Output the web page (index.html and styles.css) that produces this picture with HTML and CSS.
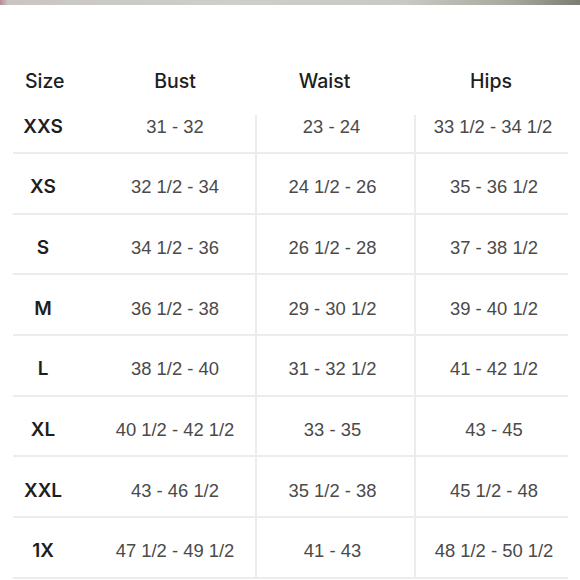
FILE: index.html
```html
<!DOCTYPE html>
<html>
<head>
<meta charset="utf-8">
<link rel="stylesheet" href="styles.css">
</head>
<body>
<div class="strip"></div>
<div class="chart">
  <div class="row head">
    <div class="cell c-size">Size</div>
    <div class="cell c-bust">Bust</div>
    <div class="cell c-waist">Waist</div>
    <div class="cell c-hips">Hips</div>
  </div>
  <div class="row first">
    <div class="cell c-size">XXS</div>
    <div class="cell c-bust">31 - 32</div>
    <div class="cell c-waist">23 - 24</div>
    <div class="cell c-hips">33 1/2 - 34 1/2</div>
  </div>
  <div class="row">
    <div class="cell c-size">XS</div>
    <div class="cell c-bust">32 1/2 - 34</div>
    <div class="cell c-waist">24 1/2 - 26</div>
    <div class="cell c-hips">35 - 36 1/2</div>
  </div>
  <div class="row">
    <div class="cell c-size">S</div>
    <div class="cell c-bust">34 1/2 - 36</div>
    <div class="cell c-waist">26 1/2 - 28</div>
    <div class="cell c-hips">37 - 38 1/2</div>
  </div>
  <div class="row">
    <div class="cell c-size">M</div>
    <div class="cell c-bust">36 1/2 - 38</div>
    <div class="cell c-waist">29 - 30 1/2</div>
    <div class="cell c-hips">39 - 40 1/2</div>
  </div>
  <div class="row">
    <div class="cell c-size">L</div>
    <div class="cell c-bust">38 1/2 - 40</div>
    <div class="cell c-waist">31 - 32 1/2</div>
    <div class="cell c-hips">41 - 42 1/2</div>
  </div>
  <div class="row">
    <div class="cell c-size">XL</div>
    <div class="cell c-bust">40 1/2 - 42 1/2</div>
    <div class="cell c-waist">33 - 35</div>
    <div class="cell c-hips">43 - 45</div>
  </div>
  <div class="row">
    <div class="cell c-size">XXL</div>
    <div class="cell c-bust">43 - 46 1/2</div>
    <div class="cell c-waist">35 1/2 - 38</div>
    <div class="cell c-hips">45 1/2 - 48</div>
  </div>
  <div class="row">
    <div class="cell c-size">1X</div>
    <div class="cell c-bust">47 1/2 - 49 1/2</div>
    <div class="cell c-waist">41 - 43</div>
    <div class="cell c-hips">48 1/2 - 50 1/2</div>
  </div>
</div>
</body>
</html>
```

FILE: styles.css
```css
html, body {
  margin: 0;
  padding: 0;
  background: #ffffff;
}
body {
  width: 580px;
  height: 580px;
  overflow: hidden;
  font-family: "Liberation Sans", Arial, sans-serif;
}
.strip {
  height: 5px;
  background: linear-gradient(90deg, #b98a95 0px, #c9c6c2 8px, #cfcecb 40%, #c9c8c2 70%, #a9a89e 88%, #7e7d72 100%);
}
.chart {
  margin-left: 13px;
  width: 555px;
}
.row {
  display: grid;
  grid-template-columns: 82px 160px 159px 154px;
  height: 60.7px;
  box-sizing: border-box;
  border-bottom: 2px solid #ececec;
}
.row.head {
  height: 88.3px;
  border-bottom: none;
  align-items: start;
  padding-top: 64px;
}
.cell {
  text-align: center;
  font-size: 18.4px;
  color: #4a4a4a;
  line-height: 24px;
  display: flex;
  align-items: center;
  justify-content: center;
  box-sizing: border-box;
  padding-top: 8px;
}
.row .c-waist, .row .c-hips {
  border-left: 2px solid #ececec;
}
.row .c-waist { padding-right: 6px; }
.row .c-hips { padding-left: 4px; }
.row.first .c-waist, .row.first .c-hips {
  border-left: none;
  background: linear-gradient(#ececec, #ececec) 0 22px / 2px 100% no-repeat;
}
.row .c-size {
  font-family: Inter, "Liberation Sans", sans-serif;
  font-weight: 600;
  font-size: 19px;
  color: #1e1e1e;
  padding-right: 22px;
}
.row.head .cell {
  font-family: Inter, "Liberation Sans", sans-serif;
  font-weight: 500;
  font-size: 19.5px;
  color: #1e1e1e;
  height: 24px;
  padding-top: 0;
  border-left: none;
}
.row.head .c-size {
  justify-content: flex-start;
  padding-left: 12px;
  padding-right: 0;
}
.row.head .c-waist { padding-right: 20px; }
.row.head .c-hips { padding-left: 0; }
```
